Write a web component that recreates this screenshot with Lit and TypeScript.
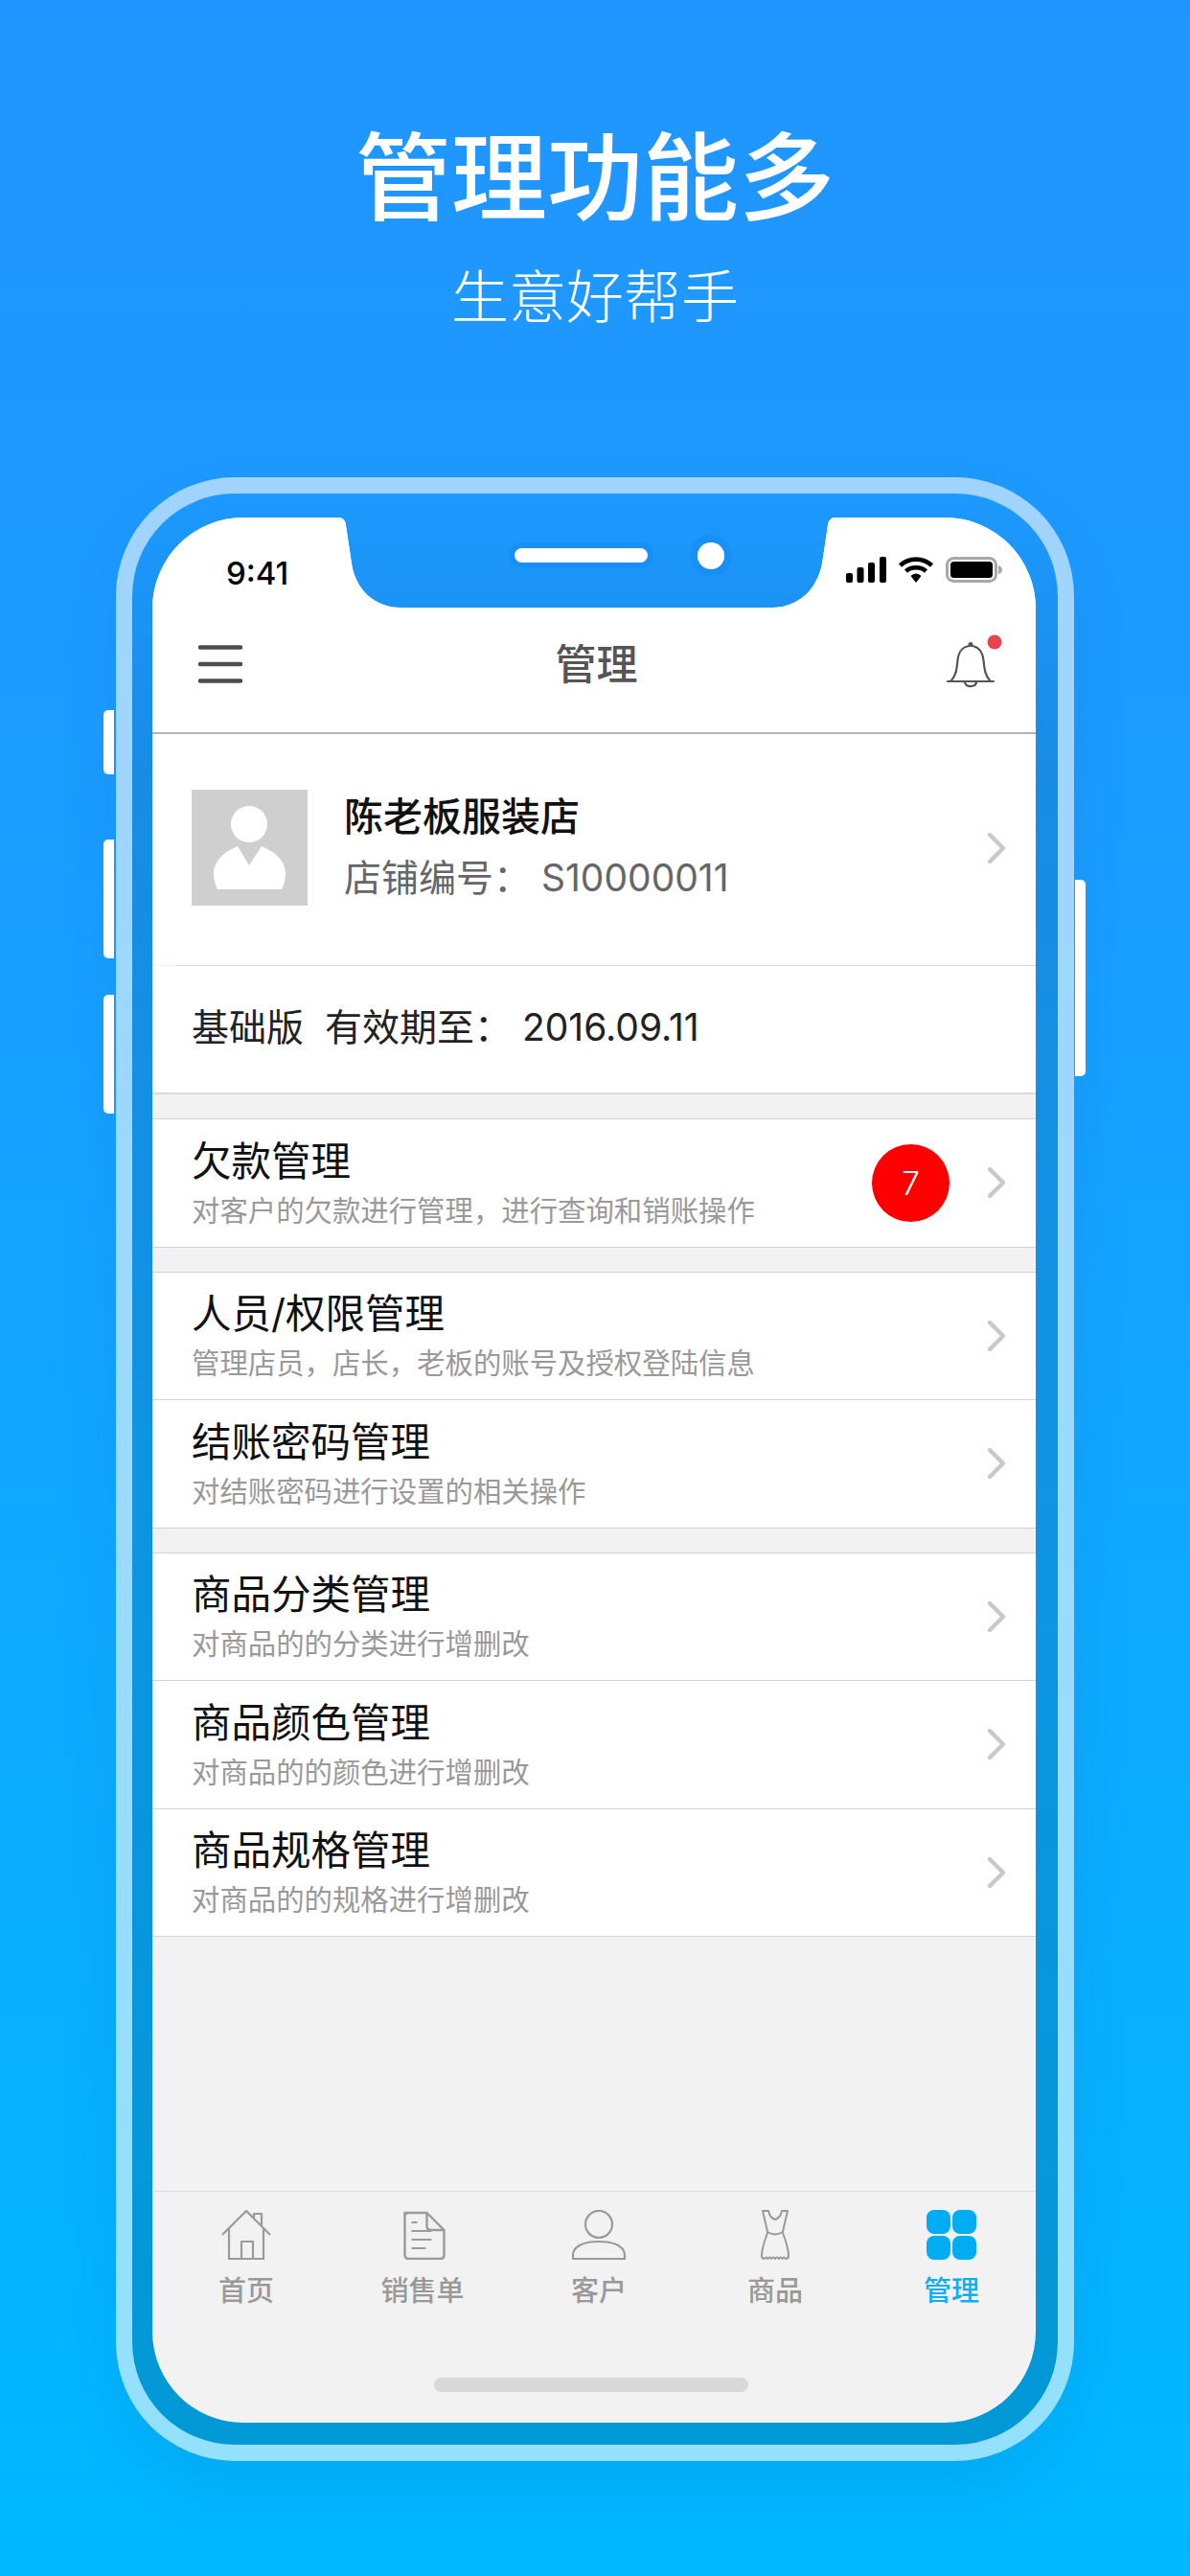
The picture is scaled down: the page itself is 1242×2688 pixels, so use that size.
import { LitElement, html, css, svg } from "lit";
import { customElement } from "lit/decorators.js";

const chevron = html`<svg class="chev" viewBox="0 0 18 32"><path d="M2 2 L16 16 L2 30" fill="none" stroke="#c8c8cd" stroke-width="4.5" stroke-linecap="round" stroke-linejoin="round"/></svg>`;

const tabIcons = {
  home: svg`<path d="M1 26 L26 1 L51 26 M8 20 V51 H44 V20 M21 51 V33 H33 V51 M34 9 V4 H42 V17" fill="none" stroke="#9a9a9a" stroke-width="2.2" stroke-linejoin="round"/>`,
  doc: svg`<path d="M4 3 H27 L45 21 V47 Q45 51 41 51 H8 Q4 51 4 47 Z M4 7 Q4 3 8 3 M27 3 V17 Q27 21 31 21 H45" fill="none" stroke="#9a9a9a" stroke-width="2.4" stroke-linejoin="round" transform="translate(1.5 0)"/><path d="M11 13 H17 M11 22 H32 M11 31 H32 M11 40 H26" stroke="#9a9a9a" stroke-width="2.2" fill="none" transform="translate(1.5 0)"/>`,
  user: svg`<circle cx="29" cy="15" r="14" fill="none" stroke="#9a9a9a" stroke-width="2.2"/><path d="M2 51 V47 C2 37 15 33 29 33 C43 33 56 37 56 47 V51 Z" fill="none" stroke="#9a9a9a" stroke-width="2.2" stroke-linejoin="round"/>`,
  dress: svg`<path d="M2 1 H8 C9 6 12 9 15 10 C18 9 21 6 22 1 H28 L25 14 C24 18 23 21 23 24 C26 32 29 40 29 48 Q29 51 26 51 Q24 48 22.500 51 Q20.500 48 19 51 Q17 48 15 51 Q13 48 11 51 Q9.500 48 7.500 51 Q6 48 4 51 Q1 51 1 48 C1 40 4 32 7 24 C7 21 6 18 5 14 Z M7 23 Q15 28 23 23" fill="none" stroke="#9a9a9a" stroke-width="2" stroke-linejoin="round"/>`,
  grid: svg`<rect x="0" y="0" width="25" height="25" rx="8" fill="#00adf2"/><rect x="27" y="0" width="25" height="25" rx="8" fill="#00adf2"/><rect x="0" y="27" width="25" height="25" rx="8" fill="#00adf2"/><rect x="27" y="27" width="25" height="25" rx="8" fill="#00adf2"/>`,
};

@customElement("app-root")
export class AppRoot extends LitElement {
  static styles = css`
    :host {
      display: block;
      width: 1242px;
      height: 2688px;
      overflow: hidden;
      background: linear-gradient(180deg, #2195ff 0%, #1b9cff 30%, #00b8ff 100%);
      font-family: "Inter", "Noto Sans CJK SC", sans-serif;
      color: #000;
    }
    .hero { display: flex; flex-direction: column; align-items: center; color: #fff; height: 498px; }
    .hero h1 { margin: 124px 0 0; font-size: 100px; line-height: 124px; font-weight: 500; }
    .hero p { margin: 22px 0 0; font-size: 60px; line-height: 80px; font-weight: 300; }

    .phone {
      position: relative;
      box-sizing: border-box;
      width: 1000px;
      height: 2070px;
      margin-left: 121px;
      padding: 25px 24px 25px 21px;
      border: 17px solid rgba(255, 255, 255, 0.58);
      border-radius: 124px;
      background: linear-gradient(180deg, rgba(0,0,0,0) 0%, rgba(0,0,0,.1) 14%, rgba(0,0,0,.11) 50%, rgba(0,0,0,.16) 100%) padding-box;
      box-shadow: 0 28px 60px rgba(0, 70, 130, 0.1);
    }
    .btn { position: absolute; background: #fff; width: 11px; }
    .btn.l { left: -30px; border-radius: 5px 0 0 5px; }
    .btn.r { right: -29px; border-radius: 0 5px 5px 0; width: 11px; top: 403px; height: 205px; }
    .b1 { top: 226px; height: 67px; }
    .b2 { top: 361px; height: 124px; }
    .b3 { top: 523px; height: 124px; }
    .speaker {
      position: absolute; left: 399px; top: 57px; width: 139px; height: 15px;
      border-radius: 8px; background: #fff; box-shadow: 0 0 0 6px rgba(0, 110, 220, 0.12);
    }
    .camera {
      position: absolute; left: 590px; top: 51px; width: 28px; height: 28px;
      border-radius: 50%; background: #fff; box-shadow: 0 0 0 8px rgba(0, 110, 220, 0.12);
    }

    .screen {
      display: flex; flex-direction: column;
      width: 922px; height: 1988px;
      background: #f2f2f2;
      clip-path: path("M0 95 A95 95 0 0 1 95 0 L194 0 Q201 0 202 8 L208 48 C212 75 232 94 259 94 L647 94 C674 94 694 75 699 48 L705 8 Q706 0 713 0 L827 0 A95 95 0 0 1 922 95 L922 1893 A95 95 0 0 1 827 1988 L95 1988 A95 95 0 0 1 0 1893 Z");
    }
    .status { display: flex; justify-content: space-between; box-sizing: border-box; height: 94px; background: #fff; padding: 0 34px 0 77px; }
    .time { font-family: "Inter", sans-serif; font-size: 33px; font-weight: 500; line-height: 40px; margin-top: 38px; }
    .sys { display: flex; gap: 12px; margin-top: 41px; height: 28px; align-items: flex-start; }

    .nav {
      display: flex; align-items: center; justify-content: space-between; box-sizing: border-box;
      height: 132px; padding: 0 35px 12px 48px; background: #fff; border-bottom: 2px solid #b4b4b6;
    }
    .nav h2 { margin: 0; font-size: 43px; font-weight: 500; color: #555; line-height: 60px; position: relative; left: 4px; }
    .burger { display: block; width: 46px; height: 40px; }
    .bell { display: block; width: 62px; height: 62px; }

    .profile { display: flex; align-items: center; background: #fff; padding: 58px 32px 62px 41px; }
    .avatar { display: block; width: 121px; height: 121px; }
    .pinfo { flex: 1; margin-left: 38px; }
    .pname { font-size: 41px; line-height: 56px; font-weight: 500; color: #111; margin-top: -2px; }
    .pid { font-size: 39px; line-height: 56px; color: #666; margin-top: 8px; }
    .div { height: 1px; margin-left: 24px; background: #d5d5d9; }
    .ver { box-sizing: border-box; height: 134px; padding: 34px 0 0 41px; background: #fff; font-size: 39px; line-height: 60px; color: #222; border-bottom: 2px solid #dcdcde; white-space: pre; }

    .group { margin-top: 25px; background: #fff; border-top: 1px solid #d2d2d6; }
    .row { display: flex; align-items: center; box-sizing: border-box; height: 133.5px; padding: 0 32px 0 41px; border-bottom: 1px solid #d2d2d6; }
    .rtxt { flex: 1; min-width: 0; }
    .rtitle { font-size: 41.5px; line-height: 50px; color: #111; margin-top: 2px; }
    .rsub { font-size: 29.4px; line-height: 40px; color: #999; margin-top: 7px; }
    .badge { display: flex; align-items: center; justify-content: center; width: 81px; height: 81px; border-radius: 50%; background: #ff0000; color: #fff; font-size: 34px; font-weight: 300; margin-right: 40px; }
    .chev { display: block; width: 18px; height: 32px; }

    .tabbar { margin-top: auto; box-sizing: border-box; height: 242px; border-top: 1px solid #dadada; }
    .tabs { display: grid; grid-template-columns: repeat(5, 184px); padding: 19px 0 0 6px; width: 916px; }
    .tab { display: flex; flex-direction: column; align-items: center; font-size: 29px; line-height: 40px; color: #999; font-weight: 500; }
    .tab svg { display: block; height: 52px; margin-bottom: 13px; }
    .tab.on { color: #0eaef2; }
    .home { width: 328px; height: 15px; margin: 70px auto 0; border-radius: 8px; background: #d8d8d8; position: relative; left: -3px; }
  `;

  private row(t: string, s: string, badge?: string) {
    return html`<div class="row">
      <div class="rtxt"><div class="rtitle">${t}</div><div class="rsub">${s}</div></div>
      ${badge ? html`<div class="badge">${badge}</div>` : ""}
      ${chevron}
    </div>`;
  }

  private tab(icon: keyof typeof tabIcons, w: number, label: string, on = false) {
    return html`<div class="tab ${on ? "on" : ""}">
      <svg style="width:${w}px" viewBox="0 0 ${w} 52">${tabIcons[icon]}</svg>
      ${label}
    </div>`;
  }

  render() {
    return html`
      <div class="hero"><h1>管理功能多</h1><p>生意好帮手</p></div>
      <div class="phone">
        <i class="btn l b1"></i><i class="btn l b2"></i><i class="btn l b3"></i><i class="btn r"></i>
        <div class="screen">
          <div class="status">
            <div class="time">9:41</div>
            <div class="sys">
              <svg width="42" height="27" viewBox="0 0 42 27"><rect x="0" y="17" width="7" height="10" rx="2"/><rect x="11.500" y="11" width="7" height="16" rx="2"/><rect x="23" y="6" width="7" height="21" rx="2"/><rect x="35" y="0" width="7" height="27" rx="2"/></svg>
              <svg width="38" height="27" viewBox="0 0 38 27"><path d="M2.500 9 C12 0.500 26 0.500 35.500 9" fill="none" stroke="#000" stroke-width="4.600"/><path d="M8.500 15 C14 10 24 10 29.500 15" fill="none" stroke="#000" stroke-width="4.600"/><path d="M13.500 20 C17 16.500 21 16.500 24.500 20 L19 27 Z"/></svg>
              <svg width="60" height="27" viewBox="0 0 60 27"><rect x="1.500" y="1.500" width="51" height="24" rx="7" fill="none" stroke="#a8a8a8" stroke-width="3"/><rect x="5" y="5" width="44" height="17" rx="3.500"/><path d="M55 9 Q59 10 59 13.500 Q59 17 55 18 Z" fill="#a8a8a8"/></svg>
            </div>
          </div>
          <div class="nav">
            <svg class="burger" viewBox="0 0 46 40"><path d="M2 2.500 H44 M2 20 H44 M2 37.500 H44" stroke="#4d4d4d" stroke-width="4.500" stroke-linecap="round"/></svg>
            <h2>管理</h2>
            <svg class="bell" viewBox="0 0 62 62"><path d="M5 49 H53 M8.500 48.500 C14 43 14.500 36 15.500 27 C16.500 17 22 12 29 12 C36 12 41.500 17 42.500 27 C43.500 36 44 43 49.500 48.500 M23 50 C24 55.500 34 55.500 35 50" fill="none" stroke="#555" stroke-width="2.200" stroke-linecap="round"/><circle cx="29" cy="10.500" r="2.500" fill="#555"/><circle cx="54" cy="8" r="7.500" fill="#e8434f"/></svg>
          </div>
          <div class="profile">
            <svg class="avatar" viewBox="0 0 121 121"><rect width="121" height="121" fill="#cfcfcf"/><circle cx="60" cy="36" r="19" fill="#fff"/><path d="M48 59 L60 79 L73 59 C87 65 98 74 98 88 C98 94 96 100 94 104 H27 C25 100 23 94 23 88 C23 74 34 65 48 59 Z" fill="#fff"/></svg>
            <div class="pinfo">
              <div class="pname">陈老板服装店</div>
              <div class="pid">店铺编号： S10000011</div>
            </div>
            ${chevron}
          </div>
          <div class="div"></div>
          <div class="ver">基础版  有效期至： 2016.09.11</div>
          <div class="group">${this.row("欠款管理", "对客户的欠款进行管理，进行查询和销账操作", "7")}</div>
          <div class="group">
            ${this.row("人员/权限管理", "管理店员，店长，老板的账号及授权登陆信息")}
            ${this.row("结账密码管理", "对结账密码进行设置的相关操作")}
          </div>
          <div class="group">
            ${this.row("商品分类管理", "对商品的的分类进行增删改")}
            ${this.row("商品颜色管理", "对商品的的颜色进行增删改")}
            ${this.row("商品规格管理", "对商品的的规格进行增删改")}
          </div>
          <div class="tabbar">
            <div class="tabs">
              ${this.tab("home", 52, "首页")}
              ${this.tab("doc", 48, "销售单")}
              ${this.tab("user", 58, "客户")}
              ${this.tab("dress", 30, "商品")}
              ${this.tab("grid", 52, "管理", true)}
            </div>
            <div class="home"></div>
          </div>
        </div>
        <div class="speaker"></div>
        <div class="camera"></div>
      </div>
    `;
  }
}
